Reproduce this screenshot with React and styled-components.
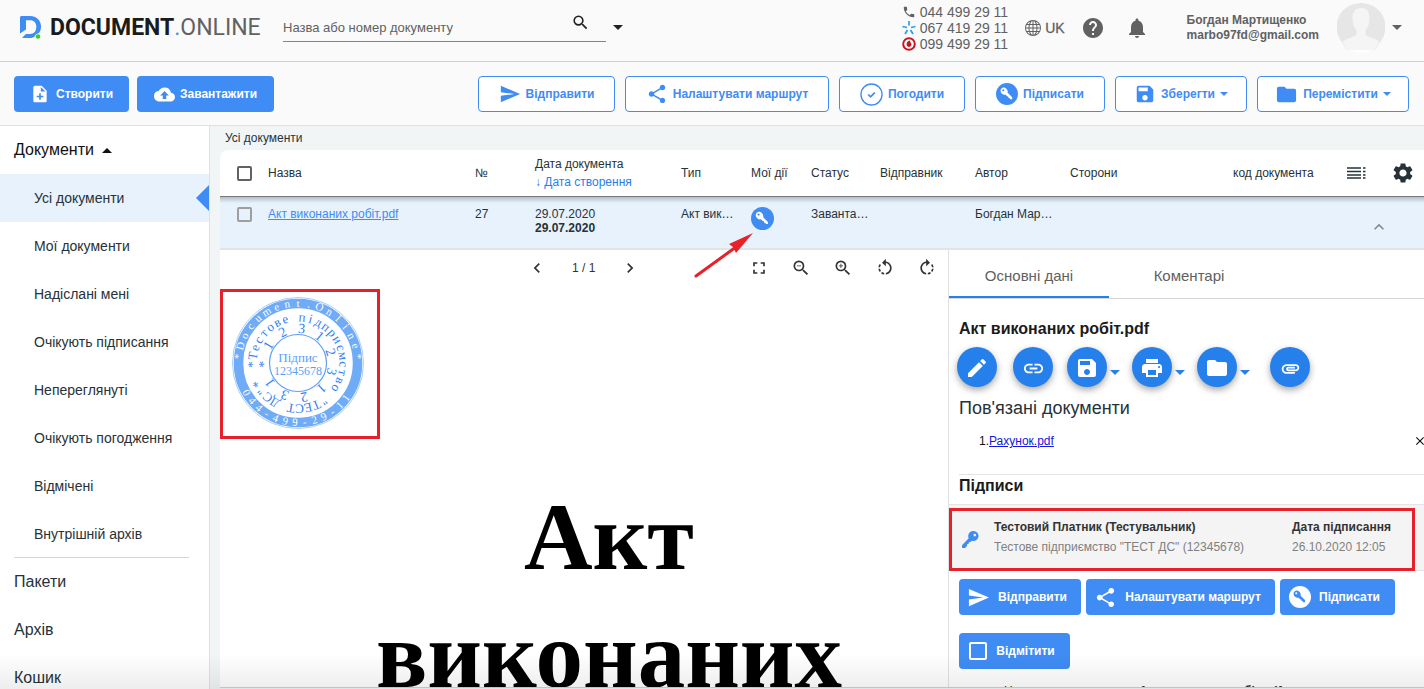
import React from "react";
import styled, { createGlobalStyle, css } from "styled-components";
import { BsGlobe } from "react-icons/bs";
import {
  MdAttachment,
  MdChevronLeft,
  MdChevronRight,
  MdClose,
  MdCloudUpload,
  MdEdit,
  MdExpandLess,
  MdFolder,
  MdFullscreen,
  MdHelp,
  MdLink,
  MdNoteAdd,
  MdNotifications,
  MdPhone,
  MdPrint,
  MdRotateLeft,
  MdRotateRight,
  MdSave,
  MdSearch,
  MdSend,
  MdSettings,
  MdShare,
  MdZoomIn,
  MdZoomOut
} from "react-icons/md";

const BLUE = "#3f8cf4";
const RED = "#e8202a";

const GlobalStyle = createGlobalStyle`
  * {
    box-sizing: border-box;
  }

  body {
    margin: 0;
    font-family: "Liberation Sans", Arial, sans-serif;
    font-size: 12px;
    color: #263238;
    background: #fff;
  }

  button,
  input {
    font-family: inherit;
  }

  button {
    border: 0;
    padding: 0;
    background: none;
    color: inherit;
    cursor: pointer;
  }

  svg {
    display: block;
    flex: none;
  }
`;

const Page = styled.div`
  position: relative;
  display: flex;
  flex-direction: column;
  height: 100vh;
  overflow: hidden;
`;

const BottomFade = styled.div`
  position: absolute;
  left: 0;
  right: 0;
  bottom: 0;
  height: 36px;
  background: linear-gradient(rgba(0, 0, 0, 0), rgba(0, 0, 0, 0.07));
  pointer-events: none;
`;

const Caret = styled.span`
  flex: none;
  width: 0;
  height: 0;
  border: ${props => props.$size || 5}px solid transparent;
  border-bottom-width: 0;
  border-top-color: currentColor;
  ${props => props.$up && "transform: rotate(180deg);"}
`;

/* header */

const Header = styled.header`
  display: flex;
  align-items: center;
  flex: none;
  height: 62px;
  padding: 0 22px 6px 18px;
  color: #616161;
  background: #fafafa;
  border-bottom: 1px solid #cfcfcf;
`;

const Logo = styled.a`
  display: flex;
  align-items: center;
  gap: 8px;
  width: 265px;
  font-family: Roboto, sans-serif;
  font-size: 23px;
  line-height: 26px;
  color: #616161;
  text-decoration: none;

  b {
    color: #1b1b1b;
  }

  i {
    font-style: normal;
    color: #2d9bf0;
  }
`;

const Search = styled.label`
  display: flex;
  align-items: center;
  width: 323px;
  height: 29px;
  padding-right: 16px;
  color: #212121;
  border-bottom: 1px solid #858585;

  input {
    flex: 1;
    min-width: 0;
    padding: 0;
    border: 0;
    outline: 0;
    font-size: 13px;
    background: none;
  }

  input::placeholder {
    color: #616161;
    opacity: 1;
  }

  svg {
    margin-bottom: 10px;
  }
`;

const SearchMore = styled.button`
  padding: 8px 7px;
  color: #212121;
`;

const Phones = styled.div`
  display: grid;
  margin-left: auto;
  font-size: 14px;
  line-height: 16px;

  span {
    display: flex;
    align-items: center;
    gap: 4px;
  }
`;

const Language = styled.button`
  display: flex;
  align-items: center;
  gap: 4px;
  margin-left: 17px;
  font-size: 14px;
  line-height: 16px;
  -webkit-text-stroke: 0.3px;
`;

const HeaderButton = styled.button`
  margin-left: ${props => props.$gap}px;
`;

const User = styled.div`
  margin-left: 38px;
  font-size: 12px;
  font-weight: bold;
  line-height: 15px;
`;

const Account = styled.button`
  display: flex;
  align-items: center;
  gap: 7px;
  margin-left: 18px;
`;

/* toolbar */

const Toolbar = styled.div`
  display: flex;
  flex: none;
  gap: 8px;
  height: 64px;
  padding: 14px 15px 0 14px;
  background: #fafafa;
  border-bottom: 1px solid #dfe2e4;
`;

const ToolGroup = styled.div`
  display: flex;
  gap: 10px;
  margin-left: auto;
`;

const Button = styled.button`
  display: flex;
  align-items: center;
  justify-content: center;
  gap: ${props => props.$gap || 5}px;
  width: ${props => props.$width}px;
  height: 36px;
  font-size: 12px;
  font-weight: bold;
  white-space: nowrap;
  color: #fff;
  background: ${BLUE};
  border-radius: 4px;

  ${props =>
    props.$outlined &&
    css`
      color: ${BLUE};
      background: #fff;
      border: 1px solid ${BLUE};
    `}
`;

/* sidebar */

const Body = styled.div`
  display: flex;
  flex: 1;
  min-height: 0;
`;

const Sidebar = styled.nav`
  flex: none;
  width: 210px;
  background: #fff;
  border-right: 1px solid #dfe2e4;
`;

const Section = styled.button`
  display: flex;
  align-items: center;
  gap: 8px;
  width: 100%;
  height: 48px;
  padding-left: 14px;
  font-size: 16px;
  color: ${props => (props.$open ? "#111" : "#263238")};
`;

const Folder = styled.a`
  display: flex;
  align-items: center;
  justify-content: space-between;
  height: 48px;
  padding-left: 34px;
  font-size: 14px;
  color: #263238;
  text-decoration: none;
  background: ${props => (props.$active ? "#e8f2fd" : "transparent")};

  &::after {
    content: "";
    display: ${props => (props.$active ? "block" : "none")};
    border: 13px solid transparent;
    border-left-width: 0;
    border-right-color: ${BLUE};
  }
`;

const Divider = styled.hr`
  height: 1px;
  margin: 0 20px 0 14px;
  border: 0;
  background: #d5d8da;
`;

const FolderList = styled.div`
  height: 383px;
`;

/* documents table */

const Main = styled.main`
  display: flex;
  flex-direction: column;
  flex: 1;
  min-width: 0;
  padding: 0 0 1px 10px;
  background: #f1f5f6;
`;

const Breadcrumb = styled.div`
  flex: none;
  height: 24px;
  padding-left: 5px;
  line-height: 24px;
`;

const Table = styled.table`
  flex: none;
  width: 100%;
  table-layout: fixed;
  border-collapse: separate;
  border-spacing: 0;
  background: #fff;
  border-top-left-radius: 8px;

  th,
  td {
    padding: 0;
    text-align: left;
    font-weight: normal;
    white-space: nowrap;
  }

  th {
    height: 47px;
    line-height: 18px;
    border-bottom: 1px solid #757b78;
  }

  td {
    height: 53px;
    padding-top: 10px;
    line-height: 14px;
    vertical-align: top;
    border-bottom: 2px solid #e0e4e7;
  }

  tbody tr {
    background: linear-gradient(rgba(60, 70, 70, 0.3), rgba(60, 70, 70, 0) 6px),
      #e8f2fd;
  }
`;

const SortLink = styled.button`
  display: block;
  font-size: 12px;
  line-height: 18px;
  color: #2680eb;
`;

const Check = styled.input`
  appearance: none;
  display: block;
  width: 15px;
  height: 15px;
  margin: 0 0 0 17px;
  border: 2px solid ${props => (props.$light ? "#9e9e9e" : "#5f6366")};
  border-radius: 2px;
`;

const DocLink = styled.a`
  color: ${BLUE};
`;

const HeadTools = styled.div`
  display: flex;
  align-items: center;
  gap: 25px;
  padding-left: 7px;
`;

const ActionCell = styled.td`
  position: relative;

  > svg {
    position: absolute;
    top: 36px;
    right: 57px;
    z-index: 1;
  }
`;

const SignButton = styled.button`
  display: block;
  color: ${BLUE};
`;

const RowToggle = styled.button`
  display: block;
  margin: 10px 0 0 29px;
  color: #808890;
`;

/* opened document */

const Detail = styled.div`
  display: flex;
  flex: 1;
  min-height: 0;
  overflow: hidden;
  background: #fff;
  border-bottom: 1px solid #cfd1d3;
`;

const Viewer = styled.section`
  flex: 1;
  min-width: 0;
`;

const ViewerBar = styled.div`
  display: flex;
  align-items: center;
  justify-content: space-between;
  height: 36px;
  padding: 0 11px 0 307px;
  color: #333;
`;

const Pager = styled.div`
  display: flex;
  align-items: center;
  gap: 25px;
`;

const ViewerTools = styled.div`
  display: flex;
  gap: 22px;
`;

const StampFrame = styled.div`
  width: 160px;
  height: 150px;
  margin-top: 3px;
  border: 3px solid ${RED};
`;

const StampText = styled.text`
  font-family: "Liberation Serif", "Times New Roman", serif;
  text-anchor: middle;
`;

const DocTitle = styled.h1`
  margin: 39px 65px 0 115px;
  font-family: "Liberation Serif", "Times New Roman", serif;
  font-size: 95px;
  line-height: 118px;
  text-align: center;
  color: #000;
`;

const Panel = styled.aside`
  flex: none;
  width: 476px;
  border-left: 1px solid #dfe2e4;
`;

const Tabs = styled.div`
  display: flex;
  border-bottom: 1px solid #d8d8d8;
`;

const Tab = styled.button`
  width: 160px;
  height: 48px;
  padding-top: 4px;
  font-size: 15px;
  color: #616161;
  border-bottom: 2px solid ${props => (props.$active ? "#2680eb" : "transparent")};
`;

const PanelTitle = styled.h2`
  margin: 0;
  padding: 20px 0 0 10px;
  font-size: 16px;
  line-height: 20px;
  color: #1b1b1b;
`;

const RoundButtons = styled.div`
  display: flex;
  padding: 8px 8px 0;
`;

const Round = styled.div`
  display: flex;
  align-items: center;
  gap: 3px;
  margin-right: ${props => props.$after}px;
  color: #2680eb;

  button {
    display: flex;
    align-items: center;
    justify-content: center;
    width: 40px;
    height: 40px;
    padding-top: 2px;
    color: #fff;
    background: #2680eb;
    border-radius: 50%;
    box-shadow: 0 3px 7px rgba(0, 0, 0, 0.35);
  }

  > span {
    margin-top: 10px;
  }
`;

const Related = styled.h3`
  margin: 10px 0 0 10px;
  font-size: 18px;
  font-weight: normal;
  line-height: 22px;
`;

const RelatedItem = styled.div`
  display: flex;
  justify-content: space-between;
  margin-left: 10px;
  padding: 14px 0 25px 20px;
  line-height: 16px;
  color: #111;
  border-bottom: 1px solid #e4e4e4;

  a {
    color: #1616e0;
  }

  button {
    flex: none;
    margin-right: -3px;
  }
`;

const Signatures = styled.h3`
  margin: 0;
  padding: 0 0 8px 10px;
  font-size: 16px;
  line-height: 21px;
  color: #1b1b1b;
`;

const SignatureRow = styled.div`
  height: 67px;
  padding: 3px 9px 0 0;
  background: #f4f4f4;
  border: solid #e4e4e4;
  border-width: 1px 0;
`;

const Signature = styled.div`
  display: grid;
  grid-template-columns: 32px 1fr 120px;
  align-items: center;
  height: 63px;
  padding-left: 10px;
  line-height: 20px;
  color: #808080;
  border: 3px solid ${RED};

  strong {
    display: block;
    color: #333;
  }
`;

const SignatureText = styled.div`
  align-self: start;
  padding-top: 6px;
`;

const PanelButtons = styled.div`
  display: flex;
  flex-wrap: wrap;
  gap: 18px 5px;
  padding: 8px 20px 14px 10px;

  button {
    padding-right: 6px;
  }
`;

const PropertyLine = styled.div`
  display: flex;
  gap: 40px;
  padding-left: 55px;
  line-height: 16px;
  color: #333;
`;

const LogoMark = () => (
  <svg width="24" height="24" viewBox="0 0 24 24" fill={BLUE}>
    <path d="M3 0h9c6.500 0 11 4.500 11 10.500 0 2.600-.8 5-2.200 6.700-2 .2-3.600 1.300-4.300 3.500-1.500.9-3 1.300-5 1.300H7.500l-3.500 0 3.800-4H12c4.200 0 6.300-3 6.300-7S16 4.300 12 4.300H8v9.200L2 17.500V1z" />
    <circle cx="20" cy="20.500" r="2.300" fill="#3ccc2e" />
  </svg>
);

const KyivstarMark = () => (
  <svg width="14" height="14" viewBox="0 0 14 14" stroke="#2d9bf0" strokeWidth="1.700">
    <path d="M7 0v4.500M.5 5.500l4.500 1M13.500 5.500 9 6.500M3 13l2.500-4M11 13 8.500 9" />
  </svg>
);

const VodafoneMark = () => (
  <svg width="14" height="14" viewBox="0 0 14 14">
    <circle cx="7" cy="7" r="5.800" fill="#fff" stroke="#cc1420" strokeWidth="2" />
    <path d="M8 3.500C5.500 4 4.500 5.800 4.500 7.500a2.500 2.500 0 0 0 5 0C9.500 6 8 5.500 8 3.500z" fill="#cc1420" />
  </svg>
);

const Avatar = () => (
  <svg width="48" height="50" viewBox="0 0 48 50">
    <ellipse cx="24" cy="25" rx="24" ry="25" fill="#fff" />
    <path d="M24 0a24 24 0 0 1 20 38l-6 9H10l-6-9A24 24 0 0 1 24 0z" fill="#e6e6e6" />
    <path
      d="M24 5c6 0 8.500 4 8.500 10 0 5-1 9-4 12v4c0 3 11 4 14 8l-5 8h-27l-5-8c3-4 14-5 14-8v-4c-3-3-4-7-4-12 0-6 2.500-10 8.500-10z"
      fill="#f5f5f5"
    />
  </svg>
);

const TocIcon = () => (
  <svg width="19" height="12" viewBox="0 0 19 12" stroke="currentColor" strokeWidth="2">
    <path d="M0 1h14M0 4.500h14M0 8h14M0 11h14M16 1h2.500M16 4.500h2.500M16 8h2.500M16 11h2.500" strokeWidth="1.600" />
  </svg>
);

const KeyBadge = ({ size, color = "#fff" }) => (
  <svg width={size} height={size} viewBox="0 0 24 24">
    <circle cx="12" cy="12" r="12" fill="currentColor" />
    <g transform="rotate(45 12 12)">
      <path
        fillRule="evenodd"
        fill={color}
        d="M7.500 8.500c1.800 0 3.200.7 4 2h7l1.500 1.500-1.500 1.700-1-.7-1.200.9-1.200-.9-1.200.7h-2.400c-.8 1.200-2.200 1.900-4 1.900C5 15.600 3.500 14 3.500 12s1.500-3.500 4-3.500zM6.200 10.900a1.100 1.100 0 1 0 0 2.200 1.100 1.100 0 0 0 0-2.200z"
      />
    </g>
  </svg>
);

const KeyIcon = () => (
  <svg width="17" height="17" viewBox="0 0 17 17">
    <path
      fillRule="evenodd"
      fill={BLUE}
      d="M11.500 0a5 5 0 1 1-1.700 9.700L8.200 11.300H6.700v1.600H5.200v1.600L3.200 17H0v-2.800l6.700-7A5 5 0 0 1 11.500 0zm1.300 2.800a1.300 1.300 0 1 0 0 2.600 1.300 1.300 0 0 0 0-2.600z"
    />
  </svg>
);

const CheckCircle = () => (
  <svg width="23" height="23" viewBox="0 0 24 24" fill="none" stroke={BLUE}>
    <circle cx="12" cy="12" r="11" strokeWidth="1.400" />
    <path d="M8.500 12l2.500 2.500 4.500-4.500" strokeWidth="1.800" />
  </svg>
);

const Arrow = () => (
  <svg width="60" height="46" viewBox="0 0 60 46">
    <path d="M2 43 42 14" stroke={RED} strokeWidth="3" strokeLinecap="round" />
    <path d="M59 0 35 11l4 3 3 6z" fill={RED} />
  </svg>
);

// One letter per equal step of the arc, angles run clockwise from the top
const Ring = ({ text, radius, from, to, size, fill, inverted }) =>
  text.split("").map((letter, i) => {
    const angle = from + ((to - from) * i) / (text.length - 1);
    return (
      <StampText
        key={i}
        y={inverted ? radius : -radius}
        fontSize={size}
        fill={fill}
        transform={`rotate(${angle})`}
      >
        {letter}
      </StampText>
    );
  });

const Stamp = () => (
  <svg width="154" height="144" viewBox="-75 -71 154 144">
    <circle r="65.500" fill="none" stroke="#a9cdfa" />
    <circle r="59.500" fill="none" stroke="#6fabf7" strokeWidth="9.500" />
    <circle r="28.500" fill="none" stroke="#5b9ff5" strokeWidth="1.200" />
    <Ring text="*Document.Online*" radius={56.5} from={-84} to={84} size={11} fill="#fff" />
    <Ring text="044-499-29-11" radius={63} from={60} to={-54} size={11} fill="#fff" inverted />
    <Ring
      text={'*Тестове підприємство "ТЕСТ ДС"*'}
      radius={41.5}
      from={-92}
      to={243}
      size={13}
      fill="#3480f0"
    />
    <Ring text="*1231231231" radius={30} from={-92} to={235} size={14} fill="#3480f0" />
    <StampText y="-1" fontSize="13" fill="#5b9ff5">
      Підпис
    </StampText>
    <StampText y="12" fontSize="12" fill="#5b9ff5">
      12345678
    </StampText>
  </svg>
);

const FOLDERS = [
  "Усі документи",
  "Мої документи",
  "Надіслані мені",
  "Очікують підписання",
  "Непереглянуті",
  "Очікують погодження",
  "Відмічені",
  "Внутрішній архів"
];

const COLUMN_WIDTHS = [48, 207, 60, 146, 70, 60, 69, 95, 95, null, 107, 84];

const TopBar = () => (
  <Header>
    <Logo href="#">
      <LogoMark />
      <span>
        <b>DOCUMENT</b>
        <i>.</i>ONLINE
      </span>
    </Logo>
    <Search>
      <input type="text" placeholder="Назва або номер документу" aria-label="Пошук" />
      <MdSearch size={19} />
    </Search>
    <SearchMore aria-label="Параметри пошуку">
      <Caret as="div" />
    </SearchMore>
    <Phones>
      <span>
        <MdPhone size={14} />
        044 499 29 11
      </span>
      <span>
        <KyivstarMark />
        067 419 29 11
      </span>
      <span>
        <VodafoneMark />
        099 499 29 11
      </span>
    </Phones>
    <Language>
      <BsGlobe size={16} />
      UK
    </Language>
    <HeaderButton $gap={16} aria-label="Довідка">
      <MdHelp size={24} />
    </HeaderButton>
    <HeaderButton $gap={20} aria-label="Сповіщення">
      <MdNotifications size={24} />
    </HeaderButton>
    <User>
      Богдан Мартищенко
      <br />
      marbo97fd@gmail.com
    </User>
    <Account aria-label="Профіль">
      <Avatar />
      <Caret />
    </Account>
  </Header>
);

const Actions = () => (
  <Toolbar>
    <Button $width={115} $gap={6}>
      <MdNoteAdd size={20} />
      Створити
    </Button>
    <Button $width={137}>
      <MdCloudUpload size={21} />
      Завантажити
    </Button>
    <ToolGroup>
      <Button $outlined $width={137}>
        <MdSend size={22} />
        Відправити
      </Button>
      <Button $outlined $width={204}>
        <MdShare size={22} />
        Налаштувати маршрут
      </Button>
      <Button $outlined $width={126}>
        <CheckCircle />
        Погодити
      </Button>
      <Button $outlined $width={130}>
        <KeyBadge size={22} />
        Підписати
      </Button>
      <Button $outlined $width={132}>
        <MdSave size={22} />
        Зберегти
        <Caret $size={4} />
      </Button>
      <Button $outlined $width={152}>
        <MdFolder size={23} />
        Перемістити
        <Caret $size={4} />
      </Button>
    </ToolGroup>
  </Toolbar>
);

const DocumentsTable = () => (
  <Table>
    <colgroup>
      {COLUMN_WIDTHS.map((width, i) => (
        <col key={i} width={width || undefined} />
      ))}
    </colgroup>
    <thead>
      <tr>
        <th>
          <Check type="checkbox" aria-label="Обрати всі" />
        </th>
        <th>Назва</th>
        <th>№</th>
        <th>
          Дата документа
          <SortLink>↓ Дата створення</SortLink>
        </th>
        <th>Тип</th>
        <th>Мої дії</th>
        <th>Статус</th>
        <th>Відправник</th>
        <th>Автор</th>
        <th>Сторони</th>
        <th>код документа</th>
        <th>
          <HeadTools>
            <TocIcon />
            <MdSettings size={24} />
          </HeadTools>
        </th>
      </tr>
    </thead>
    <tbody>
      <tr>
        <td>
          <Check $light type="checkbox" aria-label="Обрати документ" />
        </td>
        <td>
          <DocLink href="#">Акт виконаних робіт.pdf</DocLink>
        </td>
        <td>27</td>
        <td>
          29.07.2020
          <br />
          <strong>29.07.2020</strong>
        </td>
        <td>Акт вик…</td>
        <ActionCell>
          <SignButton aria-label="Підписати">
            <KeyBadge size={23} />
          </SignButton>
          <Arrow />
        </ActionCell>
        <td>Заванта…</td>
        <td />
        <td>Богдан Мар…</td>
        <td />
        <td />
        <td>
          <RowToggle aria-label="Згорнути">
            <MdExpandLess size={20} />
          </RowToggle>
        </td>
      </tr>
    </tbody>
  </Table>
);

const DocumentViewer = () => (
  <Viewer>
    <ViewerBar>
      <Pager>
        <button aria-label="Попередня сторінка">
          <MdChevronLeft size={20} />
        </button>
        1 / 1
        <button aria-label="Наступна сторінка">
          <MdChevronRight size={20} />
        </button>
      </Pager>
      <ViewerTools>
        <button aria-label="На весь екран">
          <MdFullscreen size={20} />
        </button>
        <button aria-label="Зменшити">
          <MdZoomOut size={20} />
        </button>
        <button aria-label="Збільшити">
          <MdZoomIn size={20} />
        </button>
        <button aria-label="Повернути ліворуч">
          <MdRotateLeft size={20} />
        </button>
        <button aria-label="Повернути праворуч">
          <MdRotateRight size={20} />
        </button>
      </ViewerTools>
    </ViewerBar>
    <StampFrame>
      <Stamp />
    </StampFrame>
    <DocTitle>Акт виконаних</DocTitle>
  </Viewer>
);

const DocumentPanel = () => (
  <Panel>
    <Tabs>
      <Tab $active>Основні дані</Tab>
      <Tab>Коментарі</Tab>
    </Tabs>
    <PanelTitle>Акт виконаних робіт.pdf</PanelTitle>
    <RoundButtons>
      <Round $after={16}>
        <button aria-label="Редагувати">
          <MdEdit size={24} />
        </button>
      </Round>
      <Round $after={14}>
        <button aria-label="Посилання">
          <MdLink size={23} />
        </button>
      </Round>
      <Round $after={12}>
        <button aria-label="Зберегти">
          <MdSave size={24} />
        </button>
        <Caret />
      </Round>
      <Round $after={12}>
        <button aria-label="Друк">
          <MdPrint size={24} />
        </button>
        <Caret />
      </Round>
      <Round $after={20}>
        <button aria-label="Перемістити">
          <MdFolder size={24} />
        </button>
        <Caret />
      </Round>
      <Round $after={0}>
        <button aria-label="Прикріпити">
          <MdAttachment size={21} />
        </button>
      </Round>
    </RoundButtons>
    <Related>Пов'язані документи</Related>
    <RelatedItem>
      <span>
        1.<a href="#">Рахунок.pdf</a>
      </span>
      <button aria-label="Видалити">
        <MdClose size={14} />
      </button>
    </RelatedItem>
    <Signatures>Підписи</Signatures>
    <SignatureRow>
      <Signature>
        <KeyIcon />
        <SignatureText>
          <strong>Тестовий Платник (Тестувальник)</strong>
          Тестове підприємство "ТЕСТ ДС" (12345678)
        </SignatureText>
        <SignatureText>
          <strong>Дата підписання</strong>
          26.10.2020 12:05
        </SignatureText>
      </Signature>
    </SignatureRow>
    <PanelButtons>
      <Button $width={122} $gap={8}>
        <MdSend size={23} />
        Відправити
      </Button>
      <Button $width={189} $gap={8}>
        <MdShare size={23} />
        Налаштувати маршрут
      </Button>
      <Button $width={115} $gap={8}>
        <KeyBadge size={22} color={BLUE} />
        Підписати
      </Button>
      <Button $width={111} $gap={8}>
        <svg width="20" height="20" viewBox="0 0 20 20">
          <rect x="2" y="2" width="16" height="16" rx="1" fill="none" stroke="#fff" strokeWidth="2" />
        </svg>
        Відмітити
      </Button>
    </PanelButtons>
    <PropertyLine>
      <span>Назва документу</span>
      <strong>Акт виконаних робіт.pdf</strong>
    </PropertyLine>
  </Panel>
);

const App = () => (
  <Page>
    <GlobalStyle />
    <TopBar />
    <Actions />
    <Body>
      <Sidebar>
        <Section $open>
          Документи
          <Caret $up />
        </Section>
        <FolderList>
          {FOLDERS.map((folder, i) => (
            <Folder href="#" key={folder} $active={i === 0}>
              {folder}
            </Folder>
          ))}
        </FolderList>
        <Divider />
        <Section>Пакети</Section>
        <Section>Архів</Section>
        <Section>Кошик</Section>
      </Sidebar>
      <Main>
        <Breadcrumb>Усі документи</Breadcrumb>
        <DocumentsTable />
        <Detail>
          <DocumentViewer />
          <DocumentPanel />
        </Detail>
      </Main>
    </Body>
    <BottomFade />
  </Page>
);

export default App;
